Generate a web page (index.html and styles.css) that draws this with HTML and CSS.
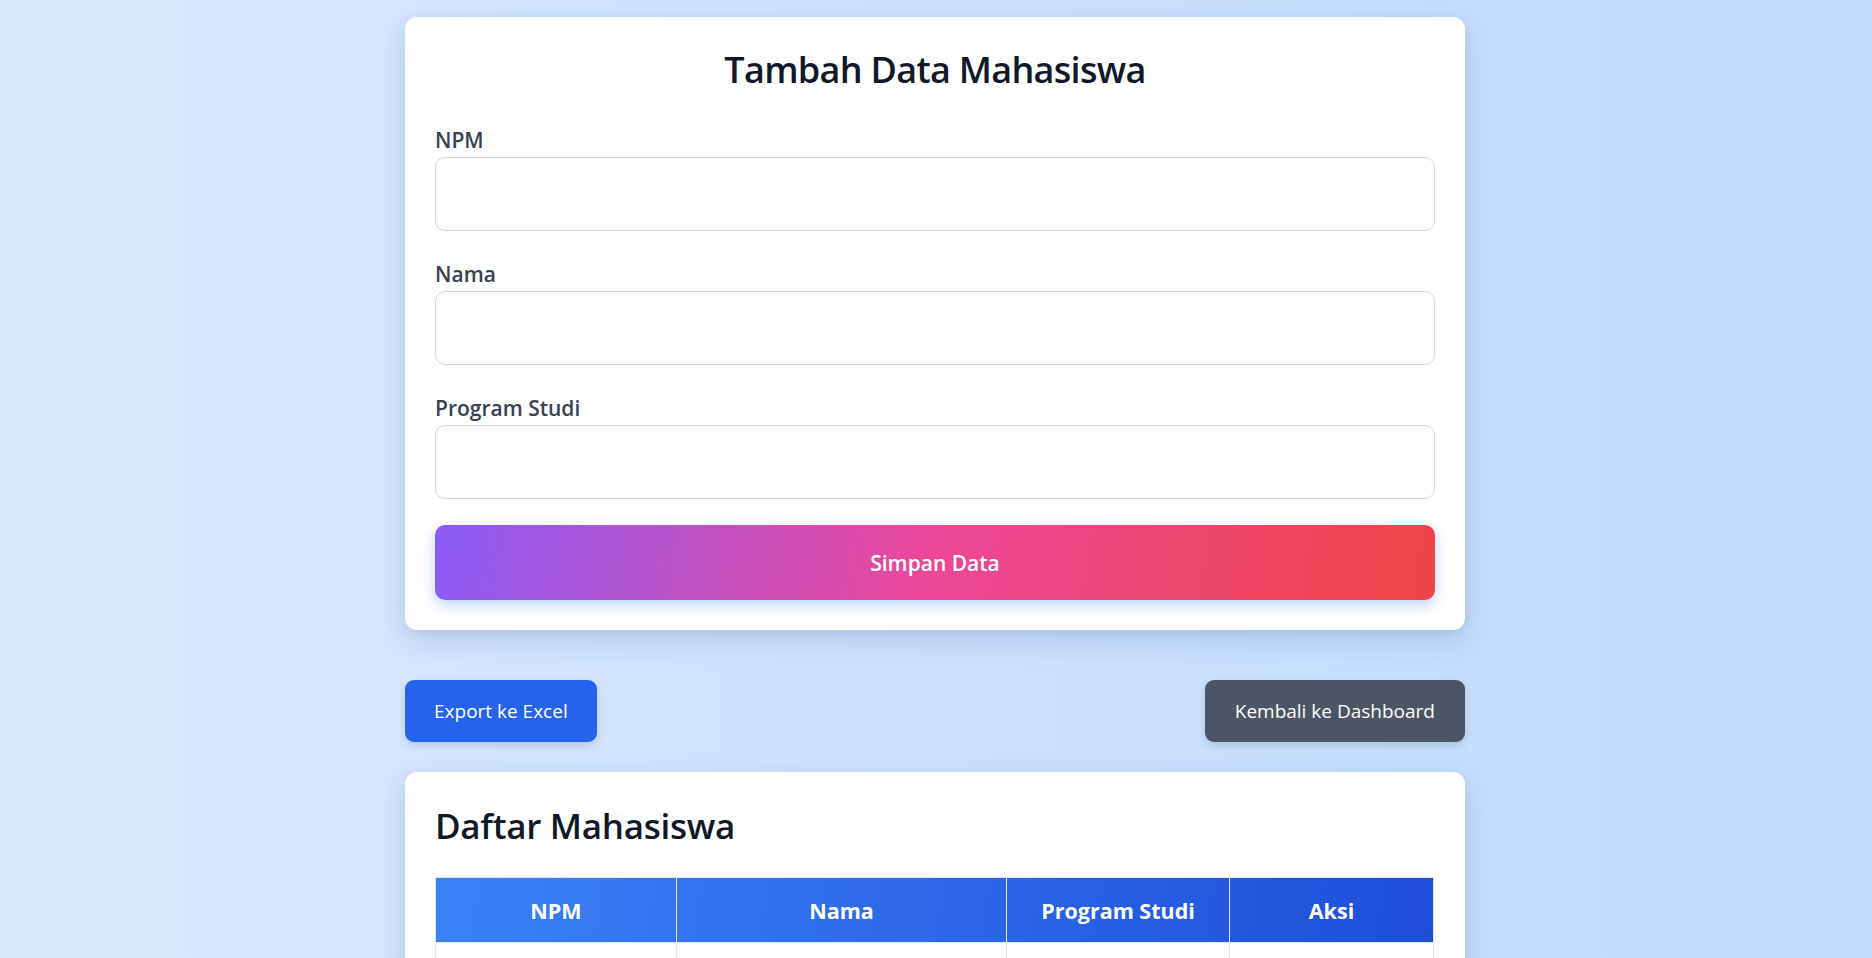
FILE: index.html
```html
<!DOCTYPE html>
<html lang="id">
<head>
<meta charset="utf-8">
<title>Tambah Data Mahasiswa</title>
<link rel="stylesheet" href="styles.css">
</head>
<body>
<div class="container">
  <section class="card form-card">
    <h1 class="form-title">Tambah Data Mahasiswa</h1>
    <form class="form">
      <div class="field">
        <label class="field-label" for="npm">NPM</label>
        <input class="field-input" id="npm" type="text">
      </div>
      <div class="field">
        <label class="field-label" for="nama">Nama</label>
        <input class="field-input" id="nama" type="text">
      </div>
      <div class="field">
        <label class="field-label" for="prodi">Program Studi</label>
        <input class="field-input" id="prodi" type="text">
      </div>
      <button class="btn-submit" type="button">Simpan Data</button>
    </form>
  </section>

  <div class="actions">
    <a class="btn btn-export" href="#">Export ke Excel</a>
    <a class="btn btn-back" href="#">Kembali ke Dashboard</a>
  </div>

  <section class="card list-card">
    <h2 class="list-title">Daftar Mahasiswa</h2>
    <table class="data-table">
      <thead>
        <tr>
          <th class="col-npm">NPM</th>
          <th class="col-nama">Nama</th>
          <th class="col-prodi">Program Studi</th>
          <th class="col-aksi">Aksi</th>
        </tr>
      </thead>
      <tbody>
        <tr>
          <td></td><td></td><td></td><td></td>
        </tr>
      </tbody>
    </table>
  </section>
</div>
</body>
</html>
```
FILE: styles.css
```css
* { box-sizing: border-box; }

html, body { margin: 0; padding: 0; }

body {
  min-height: 100vh;
  background: linear-gradient(90deg, #dae8fe 0%, #c0dbfc 100%);
  font-family: "Open Sans", "Noto Sans", Arial, sans-serif;
  color: #111827;
}

.container {
  width: 1060px;
  margin: 0 0 0 calc(50% - 531px);
  padding: 17px 0 40px;
}

.card {
  background: #ffffff;
  border-radius: 12px;
  padding: 30px;
  box-shadow: 0 10px 28px rgba(30, 64, 120, 0.16), 0 3px 8px rgba(30, 64, 120, 0.06);
}

.form-title {
  margin: 0 0 33px;
  text-align: center;
  font-size: 36px;
  line-height: 45px;
  font-weight: 600;
  color: #111827;
  letter-spacing: -0.7px;
}

.form { margin: 0; }

.field { margin-bottom: 28px; }
.field:last-of-type { margin-bottom: 26px; }

.field-label {
  display: block;
  font-size: 21px;
  line-height: 30px;
  font-weight: 600;
  color: #374151;
  margin-bottom: 2px;
}

.field-input {
  display: block;
  width: 100%;
  height: 74px;
  border: 1px solid #d1d5db;
  border-radius: 10px;
  background: #fff;
  font: inherit;
  padding: 0 16px;
}

.btn-submit {
  display: block;
  width: 100%;
  height: 75px;
  border: none;
  border-radius: 10px;
  background: linear-gradient(100deg, #8b5cf6 0%, #ec4899 50%, #ef4444 100%);
  color: #fff;
  font-family: inherit;
  font-size: 21px;
  font-weight: 600;
  box-shadow: 0 5px 14px rgba(59, 130, 246, 0.35);
  cursor: pointer;
}

.actions {
  display: flex;
  justify-content: space-between;
  margin: 50px 0 30px;
}

.btn {
  display: inline-flex;
  align-items: center;
  height: 62px;
  padding: 0 30px;
  border-radius: 9px;
  color: #fff;
  text-decoration: none;
  font-size: 19px;
  box-shadow: 0 4px 8px rgba(0, 0, 0, 0.12);
}

.btn-export { background: #2563eb; padding: 0 29px; }
.btn-back { background: #4b5563; }

.list-title {
  margin: 0 0 27px;
  font-size: 35px;
  line-height: 48px;
  font-weight: 600;
  color: #111827;
  letter-spacing: -0.3px;
}

.data-table {
  width: 998px;
  border-collapse: collapse;
  border: 1px solid #e5e7eb;
  table-layout: fixed;
}

.data-table thead tr {
  background: linear-gradient(100deg, #3b82f6 0%, #1d4ed8 100%);
}

.data-table th {
  height: 65px;
  color: #fff;
  font-size: 21.5px;
  font-weight: 700;
  text-align: center;
  border: 1px solid #e5e7eb;
}

.data-table td {
  height: 60px;
  border: 1px solid #e5e7eb;
}

.col-npm { width: 241px; }
.col-nama { width: 330px; }
.col-prodi { width: 223px; }
.col-aksi { width: 204px; }
```
